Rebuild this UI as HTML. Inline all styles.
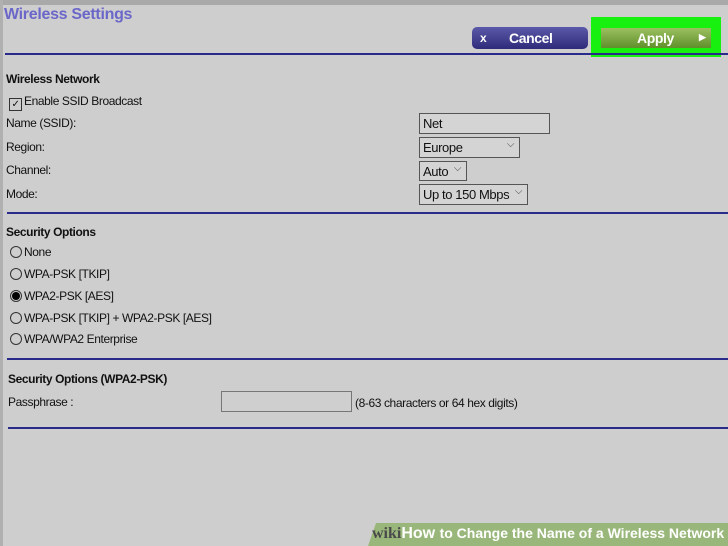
<!DOCTYPE html><html><head><style>
body{margin:0;width:728px;height:546px;background:#cecece;position:relative;overflow:hidden;font-family:"Liberation Sans",Arial,sans-serif;color:#111;font-size:12px;letter-spacing:-0.4px}
.a{position:absolute;white-space:nowrap}
.b{font-weight:bold}
.ln{position:absolute;height:2px;background:#2a2a8a;right:0}
.box{position:absolute;border:1px solid #555;background:#d4d4d4;font-size:13px;box-sizing:border-box;padding:2px 3px}
.box i{position:absolute;right:5px;top:1px;font-style:normal;font-size:10px;color:#444}
.r{display:inline-block;width:12px;height:12px;border:1px solid #333;border-radius:50%;vertical-align:-2px;margin-right:2px;box-sizing:border-box;position:relative}
.r.on::after{content:"";position:absolute;left:1px;top:1px;width:8px;height:8px;border-radius:50%;background:#000}
</style></head><body>
<div class="a" style="left:0;top:0;width:728px;height:5px;background:#a9a9a9"></div>
<div class="a" style="left:0;top:0;width:3px;height:546px;background:#b0b0b0"></div>
<div class="a" style="left:4px;top:6px;font-size:16px;font-weight:bold;color:#6a67c9;letter-spacing:-0.3px">Wireless Settings</div>
<div class="a" style="left:472px;top:27px;width:116px;height:22px;border-radius:5px;background:linear-gradient(#5a58a8,#2e2c7a);color:#fff;font-weight:bold;font-size:14px"><span style="position:absolute;left:8px;top:4px;font-size:12px">x</span><span style="position:absolute;left:37px;top:3px">Cancel</span></div>
<div class="a" style="left:591px;top:17px;width:130px;height:40px;background:#18f010"></div>
<div class="a" style="left:601px;top:28px;width:110px;height:20px;background:linear-gradient(#9cc060,#5f8f2a);color:#fff;font-weight:bold;font-size:14px"><span style="position:absolute;left:36px;top:2px">Apply</span><span style="position:absolute;left:98px;top:4px;font-size:9px">▶</span></div>
<div class="ln" style="left:5px;top:53px"></div>
<div class="a b" style="left:6px;top:72px">Wireless Network</div>
<div class="a" style="left:9px;top:94px"><span style="display:inline-block;width:11px;height:11px;border:1px solid #333;font-size:10px;line-height:11px;text-align:center;vertical-align:-2px;margin-right:2px">✓</span>Enable SSID Broadcast</div>
<div class="a" style="left:6px;top:116px">Name (SSID):</div>
<div class="a" style="left:6px;top:140px">Region:</div>
<div class="a" style="left:6px;top:163px">Channel:</div>
<div class="a" style="left:6px;top:187px">Mode:</div>
<div class="box" style="left:419px;top:113px;width:131px;height:21px">Net</div>
<div class="box" style="left:419px;top:137px;width:101px;height:21px">Europe<i>⌵</i></div>
<div class="box" style="left:419px;top:161px;width:48px;height:20px">Auto<i>⌵</i></div>
<div class="box" style="left:419px;top:184px;width:109px;height:21px">Up to 150 Mbps<i>⌵</i></div>
<div class="ln" style="left:7px;top:212px"></div>
<div class="a b" style="left:6px;top:225px">Security Options</div>
<div class="a" style="left:10px;top:245px"><span class="r"></span>None</div>
<div class="a" style="left:10px;top:267px"><span class="r"></span>WPA-PSK [TKIP]</div>
<div class="a" style="left:10px;top:289px"><span class="r on"></span>WPA2-PSK [AES]</div>
<div class="a" style="left:10px;top:311px"><span class="r"></span>WPA-PSK [TKIP] + WPA2-PSK [AES]</div>
<div class="a" style="left:10px;top:332px"><span class="r"></span>WPA/WPA2 Enterprise</div>
<div class="ln" style="left:7px;top:358px"></div>
<div class="a b" style="left:8px;top:372px">Security Options (WPA2-PSK)</div>
<div class="a" style="left:8px;top:395px">Passphrase :</div>
<div class="box" style="left:221px;top:391px;width:131px;height:21px;background:#cfcfcf;border-color:#777"></div>
<div class="a" style="left:355px;top:396px">(8-63 characters or 64 hex digits)</div>
<div class="ln" style="left:8px;top:427px"></div>
<div class="a" style="left:368px;top:523px;width:360px;height:23px;background:#9ab77b;clip-path:polygon(8px 0,100% 0,100% 100%,0 100%)"></div>
<div class="a" style="left:372px;top:525px;font-size:16px;font-weight:bold;letter-spacing:0;color:#fff"><span style="font-family:'Liberation Serif',serif;color:#4a4a4a">wiki</span>How <span style="font-size:14px">to Change the Name of a Wireless Network</span></div>
</body></html>
